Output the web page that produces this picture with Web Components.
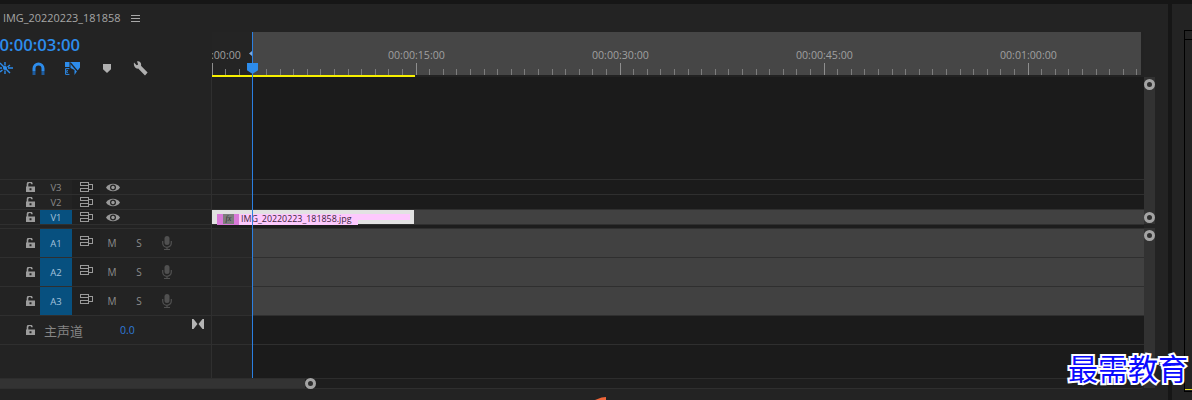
<!DOCTYPE html>
<html>
<head>
<meta charset="utf-8">
<title>Timeline</title>
<style>
    html, body { margin: 0; height: 400px; overflow: hidden; }
    body {
        display: flex;
        position: relative;
        padding-top: 4px;
        box-sizing: border-box;
        background: #161616;
        font-family: "Open Sans", "Noto Sans CJK SC", sans-serif;
    }
</style>
</head>
<body>
<pr-timeline>
    <pr-title slot="title">IMG_20220223_181858</pr-title>
    <pr-toolbar slot="tools" timecode="00:00:03:00"></pr-toolbar>
    <pr-ruler slot="ruler"></pr-ruler>
    <pr-track slot="tracks" name="V3" kind="video"></pr-track>
    <pr-track slot="tracks" name="V2" kind="video"></pr-track>
    <pr-track slot="tracks" name="V1" kind="video" active filled>
        <pr-clip>IMG_20220223_181858.jpg</pr-clip>
    </pr-track>
    <pr-track slot="tracks" kind="gap"></pr-track>
    <pr-track slot="tracks" name="A1" kind="audio" active filled></pr-track>
    <pr-track slot="tracks" name="A2" kind="audio" active filled></pr-track>
    <pr-track slot="tracks" name="A3" kind="audio" active filled></pr-track>
    <pr-track slot="tracks" name="主声道" kind="master" level="0.0"></pr-track>
    <pr-track slot="tracks" kind="empty"></pr-track>
</pr-timeline>
<pr-side></pr-side>
<pr-watermark>最需教育</pr-watermark>

<script>
const BLUE = '#2d8ceb';
const ICONS = {
    lock: `<svg width="9" height="10" viewBox="0 0 9 10"><path d="M1.5 5V2.6A2.2 2.2 0 0 1 6 2.2" fill="none" stroke="#9c9c9c" stroke-width="1.6"/><path fill-rule="evenodd" d="M0 4.5H9V10H0ZM3.5 6.2V8.2H5.5V6.2Z" fill="#9c9c9c"/></svg>`,
    film: `<svg width="13" height="10" viewBox="0 0 13 10"><g fill="none" stroke="#9a9a9a" shape-rendering="crispEdges"><rect x=".5" y=".5" width="8" height="3"/><rect x=".5" y="6" width="8" height="3"/><rect x="8.5" y="2.5" width="4" height="4.5"/></g></svg>`,
    eye: `<svg width="14" height="9" viewBox="0 0 14 9"><path d="M0 4.5C3 -.5 11 -.5 14 4.5C11 9.5 3 9.5 0 4.5Z" fill="#9a9a9a"/><circle cx="7" cy="4.5" r="3" fill="#252525"/><circle cx="7" cy="4.5" r="1.7" fill="#9a9a9a"/></svg>`,
    mic: `<svg width="10" height="14" viewBox="0 0 10 14"><rect x="2.5" y="0" width="5" height="9" rx="2.5" fill="#505050"/><path d="M.7 5V7A4.3 4.3 0 0 0 9.3 7V5M5 11V13M2 13.5H8" fill="none" stroke="#505050" stroke-width="1.2"/></svg>`,
    collapse: `<svg width="12" height="10" viewBox="0 0 12 10"><path d="M0 0H1.5L5.5 5L1.5 10H0ZM12 0H10.5L6.5 5L10.5 10H12Z" fill="#b4b4b4"/></svg>`,
    menu: `<svg width="9" height="7" viewBox="0 0 9 7"><path d="M0 .5H9M0 3.5H9M0 6.5H9" stroke="#a8a8a8" stroke-width="1"/></svg>`,
    nest: `<svg width="16" height="14" viewBox="0 0 16 14"><g fill="none" stroke="${BLUE}" stroke-width="1.4"><path d="M0 7H5M11 7H16M8 1V4.5M8 9.5V13M3 2L13 12M13 4L10.5 6M5.5 9L3 11"/></g><circle cx="8" cy="7" r="2" fill="${BLUE}"/></svg>`,
    magnet: `<svg width="13" height="13" viewBox="0 0 13 13"><path d="M.5 9V6.5A6 6 0 0 1 12.5 6.5V9H9.5V6.5A3 3 0 0 0 3.5 6.5V9Z" fill="${BLUE}"/><path d="M.5 9H3.5V13H.5ZM9.5 9H12.5V13H9.5Z" fill="#1f5c9e"/></svg>`,
    link: `<svg width="15" height="13" viewBox="0 0 15 13"><path d="M0 0H4.5V5H0Z" fill="${BLUE}"/><path d="M.6 6.6H4.4M.6 6.6V12.4H4.4M2.8 8.5H1.8V10.6H2.8" fill="none" stroke="${BLUE}" stroke-width="1"/><path d="M5.5 0H15V5.5L11.5 10L9.5 13V8L5.5 6Z" fill="${BLUE}"/><path d="M5.5 1L14 11" stroke="#232323" stroke-width="1.2"/></svg>`,
    marker: `<svg width="8" height="9" viewBox="0 0 8 9"><path d="M0 0H8V5.2L4 9L0 5.2Z" fill="#b0b0b0"/></svg>`,
    wrench: `<svg width="15" height="15" viewBox="0 0 15 15"><path d="M1 1.6L3.6 4.2L5.2 3.4L4 .6C6.4 -.4 8.8 2 8 4.8L14.6 11.4L12 14.4L5.2 7.6C2.6 8.2 .2 5 1 1.6Z" fill="#b0b0b0"/></svg>`
};

class PrIcon extends HTMLElement {
    constructor() {
        super();
        this.attachShadow({ mode: 'open' });
    }

    connectedCallback() {
        this.shadowRoot.innerHTML = `
            <style>
                :host { display: inline-flex; line-height: 0; }
            </style>
            ${ICONS[this.getAttribute('name')] || ''}
        `;
    }
}

class PrKnob extends HTMLElement {
    constructor() {
        super();
        this.attachShadow({ mode: 'open' });
        this.shadowRoot.innerHTML = `
            <style>
                :host {
                    display: block;
                    width: 11px;
                    height: 11px;
                    box-sizing: border-box;
                    border: 3px solid #a4a4a4;
                    border-radius: 50%;
                    background: #2f2f2f;
                    flex: none;
                }
            </style>
        `;
    }
}

class PrTitle extends HTMLElement {
    constructor() {
        super();
        this.attachShadow({ mode: 'open' });
        this.shadowRoot.innerHTML = `
            <style>
                :host {
                    display: flex;
                    align-items: center;
                    gap: 11px;
                    height: 28px;
                    padding-left: 3px;
                    font-size: 10.9px;
                    color: #a6a6a6;
                }
                span { display: block; margin-top: -1px; }
            </style>
            <span><slot></slot></span>
            <pr-icon name="menu"></pr-icon>
        `;
    }
}

class PrToolbar extends HTMLElement {
    constructor() {
        super();
        this.attachShadow({ mode: 'open' });
    }

    get timecode() {
        return this.getAttribute('timecode') || '00:00:00:00';
    }

    connectedCallback() {
        this.shadowRoot.innerHTML = `
            <style>
                :host {
                    display: block;
                    height: 45px;
                    overflow: hidden;
                }
                .tc {
                    margin: 3px 0 0 -10px;
                    height: 20px;
                    line-height: 20px;
                    font-size: 16.7px;
                    font-weight: 600;
                    color: ${BLUE};
                    white-space: nowrap;
                }
                .tools {
                    display: flex;
                    align-items: center;
                    height: 16px;
                    margin: 5px 0 0 -3px;
                }
                .tools pr-icon { flex: none; }
            </style>
            <div class="tc">${this.timecode}</div>
            <div class="tools">
                <pr-icon name="nest" style="margin-right:19px"></pr-icon>
                <pr-icon name="magnet" style="margin-right:20px"></pr-icon>
                <pr-icon name="link" style="margin-right:23px"></pr-icon>
                <pr-icon name="marker" style="margin-right:22px"></pr-icon>
                <pr-icon name="wrench"></pr-icon>
            </div>
        `;
    }
}

class PrRuler extends HTMLElement {
    constructor() {
        super();
        this.attachShadow({ mode: 'open' });
    }

    // minor ticks every 13.6px, a longer one every 15 ticks
    ticks() {
        let out = '';
        for (let i = 0; i * 13.6 < 926; i++) {
            const x = Math.floor(i * 13.6);
            const major = i % 15 === 0;
            out += `<rect x="${x}" y="${major ? 0 : 6}" width="1" height="${major ? 12 : 6}" fill="${major ? '#8e8e8e' : '#7c7c7c'}"/>`;
        }
        return out;
    }

    connectedCallback() {
        const labels = ['00:00:00:00', '00:00:15:00', '00:00:30:00', '00:00:45:00', '00:01:00:00'];
        this.shadowRoot.innerHTML = `
            <style>
                :host {
                    display: block;
                    height: 45px;
                    overflow: hidden;
                    background: #222;
                }
                .band {
                    height: 43px;
                    width: 929px;
                    background: linear-gradient(to right, #242424 40px, #464646 40px);
                    display: flex;
                    flex-direction: column;
                    overflow: hidden;
                }
                .labels {
                    display: flex;
                    margin: 16px 0 0 -28px;
                    height: 15px;
                    line-height: 15px;
                    font-size: 10.6px;
                    color: #a0a0a0;
                }
                .labels span { flex: none; width: 204px; white-space: nowrap; }
                svg { display: block; }
                .yellow { width: 203px; height: 2px; background: #f7f000; }
            </style>
            <div class="band">
                <div class="labels">${labels.map(l => `<span>${l}</span>`).join('')}</div>
                <svg width="929" height="12">${this.ticks()}</svg>
            </div>
            <div class="yellow"></div>
        `;
    }
}

class PrTrack extends HTMLElement {
    constructor() {
        super();
        this.attachShadow({ mode: 'open' });
    }

    get kind() {
        return this.getAttribute('kind');
    }

    head() {
        const name = this.getAttribute('name');
        const label = `<div class="label ${this.hasAttribute('active') ? 'on' : ''}">${name}</div>`;
        const lock = `<div class="lock"><pr-icon name="lock"></pr-icon></div>`;
        if (this.kind === 'video') {
            return `${lock}${label}<div class="sync"><pr-icon name="film"></pr-icon></div><div class="cell"><pr-icon name="eye"></pr-icon></div>`;
        }
        if (this.kind === 'audio') {
            return `${lock}${label}<div class="sync up"><pr-icon name="film"></pr-icon></div><div class="cell txt m">M</div><div class="cell txt">S</div><div class="cell mic"><pr-icon name="mic"></pr-icon></div>`;
        }
        if (this.kind === 'master') {
            return `${lock}<div class="master">${name}</div><div class="level">${this.getAttribute('level')}</div><div class="collapse"><pr-icon name="collapse"></pr-icon></div>`;
        }
        return '';
    }

    connectedCallback() {
        const heights = { video: 15, gap: 4, audio: 29, master: 29, empty: 34 };
        const height = heights[this.kind] || 15;
        const filled = this.hasAttribute('filled');
        const fill = filled ? '#414141' : '#1b1b1b';
        const leftFill = filled ? '#262626' : '#212121';
        this.shadowRoot.innerHTML = `
            <style>
                :host {
                    display: grid;
                    grid-template-columns: 212px 1fr;
                    height: ${height}px;
                    box-sizing: border-box;
                    border-top: 1px solid #2f2f2f;
                    background: #232323;
                }
                .head {
                    display: grid;
                    grid-template-columns: 40px 32px 28px 26px 26px 30px;
                    align-items: stretch;
                    border-right: 1px solid #2f2f2f;
                    font-size: 10px;
                    color: #8c8c8c;
                    overflow: hidden;
                }
                .head > div { display: flex; align-items: center; justify-content: center; }
                .head > .lock { justify-content: flex-start; padding-left: 26px; }
                .label { font-size: 9.5px; color: #8a8a8a; }
                .label.on { background: #07507f; color: #a3c3dc; }
                .sync { background: #202020; }
                .sync.up { align-items: flex-start !important; padding-top: 7px; }
                .txt { font-size: 10px; }
                .m { padding-right: 2px; }
                .head > .master {
                    grid-column: span 2;
                    justify-content: flex-start;
                    padding-left: 4px;
                    font-size: 13px;
                    color: #858585;
                    white-space: nowrap;
                }
                .head > .level {
                    grid-column: span 2;
                    justify-content: flex-start;
                    padding-left: 20px;
                    font-size: 10.5px;
                    color: #2f7ad8;
                }
                .head > .collapse {
                    align-items: flex-start;
                    justify-content: flex-start;
                    padding: 3px 0 0 18px;
                    margin-left: 22px;
                    width: 34px;
                    box-sizing: border-box;
                }
                .lane {
                    background: linear-gradient(to right, ${leftFill} 40px, ${fill} 40px);
                }
                :host([kind="gap"]) .lane { background: #1d1d1d; }
            </style>
            <div class="head">${this.head()}</div>
            <div class="lane"><slot></slot></div>
        `;
    }
}

class PrClip extends HTMLElement {
    constructor() {
        super();
        this.attachShadow({ mode: 'open' });
        this.shadowRoot.innerHTML = `
            <style>
                :host {
                    display: block;
                    position: relative;
                    width: 202px;
                    height: 14px;
                    background: #e2e2e2;
                }
                .band { position: absolute; background: #fdc9fd; }
                .a { left: 5px; top: 4px; width: 193px; height: 6px; }
                .b { left: 5px; top: 10px; width: 141px; height: 5px; }
                .c { left: 5px; top: 4px; width: 22px; height: 11px; background: #d97ad9; }
                .fx {
                    position: absolute;
                    left: 11px;
                    top: 4px;
                    width: 11px;
                    height: 10px;
                    background: #7e7e7e;
                    color: #333;
                    font: italic 8px/10px "Liberation Serif", serif;
                    text-align: center;
                }
                .name {
                    position: absolute;
                    left: 29px;
                    top: 3px;
                    line-height: 12px;
                    font-size: 8.9px;
                    color: #3c243c;
                    white-space: nowrap;
                }
            </style>
            <div class="band a"></div>
            <div class="band b"></div>
            <div class="band c"></div>
            <div class="fx">fx</div>
            <div class="name"><slot></slot></div>
        `;
    }
}

class PrTimeline extends HTMLElement {
    constructor() {
        super();
        this.attachShadow({ mode: 'open' });
        this.shadowRoot.innerHTML = `
            <style>
                :host {
                    display: block;
                    position: relative;
                    width: 1168px;
                    height: 396px;
                    background: #232323;
                    overflow: hidden;
                    flex: none;
                }
                .main {
                    display: grid;
                    grid-template-columns: 212px 932px 12px;
                    grid-template-rows: 45px 301px;
                }
                .rows { grid-column: 1 / span 2; }
                .spacer {
                    display: grid;
                    grid-template-columns: 212px 1fr;
                    height: 102px;
                }
                .spacer .l { border-right: 1px solid #2f2f2f; }
                .spacer .r { background: linear-gradient(to right, #212121 40px, #1b1b1b 40px); }
                .vbar {
                    grid-column: 3;
                    grid-row: 2;
                    display: flex;
                    flex-direction: column;
                    gap: 4px;
                    width: 11px;
                }
                .seg {
                    display: flex;
                    flex: none;
                    flex-direction: column;
                    justify-content: space-between;
                    padding: 2px 0 1px;
                    box-sizing: border-box;
                    background: #323232;
                }
                .seg.one { height: 147px; }
                .seg.two { height: 160px; }
                .hbar {
                    display: flex;
                    height: 11px;
                    width: 1144px;
                    box-sizing: border-box;
                    border-top: 1px solid #2d2d2d;
                    border-bottom: 1px solid #2f2f2f;
                    background: #1e1e1e;
                    border-bottom-right-radius: 4px;
                }
                .hbar .thumb { width: 305px; background: #333; }
                .hbar pr-knob { position: relative; top: -1px; }
                .playhead {
                    position: absolute;
                    left: 252px;
                    top: 28px;
                    width: 1px;
                    height: 346px;
                    background: #2b7fe0;
                }
                .inpoint {
                    position: absolute;
                    left: 249px;
                    top: 47px;
                    width: 3px;
                    height: 5px;
                    background: #7fa8d8;
                    clip-path: polygon(100% 0, 0 50%, 100% 100%);
                }
                .cap {
                    position: absolute;
                    left: 247px;
                    top: 59px;
                    width: 11px;
                    height: 11px;
                    background: ${BLUE};
                    clip-path: polygon(0 0, 100% 0, 100% 65%, 50% 100%, 0 65%);
                }
                .blip {
                    position: absolute;
                    left: 595px;
                    top: 393px;
                    width: 11px;
                    height: 3px;
                    background: #f0663a;
                    clip-path: polygon(0 100%, 60% 20%, 100% 0, 100% 100%);
                }
            </style>
            <slot name="title"></slot>
            <div class="main">
                <slot name="tools"></slot>
                <slot name="ruler"></slot>
                <div></div>
                <div class="rows">
                    <div class="spacer"><div class="l"></div><div class="r"></div></div>
                    <slot name="tracks"></slot>
                </div>
                <div class="vbar">
                    <div class="seg one"><pr-knob></pr-knob><pr-knob></pr-knob></div>
                    <div class="seg two"><pr-knob></pr-knob></div>
                </div>
            </div>
            <div class="hbar"><div class="thumb"></div><pr-knob></pr-knob></div>
            <div class="playhead"></div>
            <div class="inpoint"></div>
            <div class="cap"></div>
            <div class="blip"></div>
        `;
    }
}

class PrSide extends HTMLElement {
    constructor() {
        super();
        this.attachShadow({ mode: 'open' });
        this.shadowRoot.innerHTML = `
            <style>
                :host {
                    display: flex;
                    flex: 1;
                    margin-left: 4px;
                    height: 396px;
                    box-sizing: border-box;
                    padding: 26px 0 8px 12px;
                    background: #232323;
                }
                .box {
                    flex: 1;
                    display: flex;
                    flex-direction: column;
                    border: 1px solid #000;
                    border-right: 0;
                }
                .top { height: 8px; border-bottom: 1px solid #000; }
                .fill { flex: 1; }
                .bottom { height: 1px; background: #e8e020; }
                .edge { height: 1px; }
            </style>
            <div class="box">
                <div class="top"></div>
                <div class="fill"></div>
                <div class="bottom"></div>
                <div class="edge"></div>
            </div>
        `;
    }
}

class PrWatermark extends HTMLElement {
    constructor() {
        super();
        this.attachShadow({ mode: 'open' });
        this.shadowRoot.innerHTML = `
            <style>
                :host {
                    position: absolute;
                    left: 1068px;
                    top: 348px;
                    font: 400 30px/38px "Noto Sans CJK SC", sans-serif;
                    color: #0a0aff;
                    -webkit-text-stroke: 4px #fff;
                    paint-order: stroke fill;
                    white-space: nowrap;
                }
            </style>
            <slot></slot>
        `;
    }
}

customElements.define('pr-icon', PrIcon);
customElements.define('pr-knob', PrKnob);
customElements.define('pr-title', PrTitle);
customElements.define('pr-toolbar', PrToolbar);
customElements.define('pr-ruler', PrRuler);
customElements.define('pr-track', PrTrack);
customElements.define('pr-clip', PrClip);
customElements.define('pr-timeline', PrTimeline);
customElements.define('pr-side', PrSide);
customElements.define('pr-watermark', PrWatermark);
</script>
</body>
</html>
